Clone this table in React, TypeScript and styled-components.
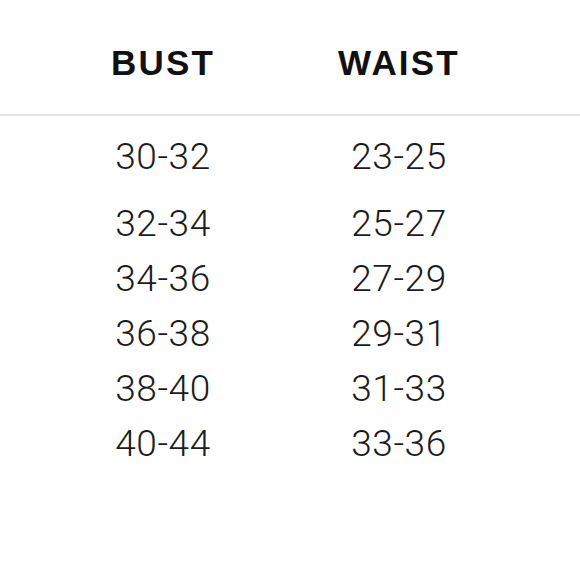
import React from "react";
import styled, { createGlobalStyle } from "styled-components";

const GlobalStyle = createGlobalStyle`
  html, body {
    margin: 0;
    padding: 0;
    background: #ffffff;
  }
  body {
    font-family: "Liberation Sans", Arial, sans-serif;
  }
`;

const Page = styled.div`
  width: 580px;
  height: 579px;
  background: #ffffff;
  overflow: hidden;
`;

const Columns = styled.div`
  display: grid;
  grid-template-columns: 236px 236px;
  padding-left: 45px;
`;

const HeaderBar = styled.div`
  padding-top: 45px;
  padding-bottom: 34px;
  border-bottom: 2px solid #e2e2e2;
`;

const HeadCell = styled.div`
  font-family: "Liberation Sans", Arial, sans-serif;
  font-weight: 700;
  font-size: 35px;
  line-height: 35px;
  letter-spacing: 2.2px;
  color: #111111;
  text-align: center;
`;

const Body = styled.div`
  display: flex;
  flex-direction: column;
  gap: 19px;
  padding-top: 23px;
`;

const Row = styled(Columns)<{ $lead?: boolean }>`
  margin-bottom: ${(p) => (p.$lead ? "12px" : "0")};
`;

const Cell = styled.div`
  font-family: Roboto, "Liberation Sans", sans-serif;
  font-weight: 300;
  font-size: 37px;
  line-height: 36px;
  letter-spacing: 0.6px;
  color: #1c1c1c;
  text-align: center;
`;

const rows: [string, string][] = [
  ["30-32", "23-25"],
  ["32-34", "25-27"],
  ["34-36", "27-29"],
  ["36-38", "29-31"],
  ["38-40", "31-33"],
  ["40-44", "33-36"],
];

export default function App() {
  return (
    <Page>
      <GlobalStyle />
      <HeaderBar>
        <Columns>
          <HeadCell>BUST</HeadCell>
          <HeadCell>WAIST</HeadCell>
        </Columns>
      </HeaderBar>
      <Body>
        {rows.map(([bust, waist], i) => (
          <Row key={bust} $lead={i === 0}>
            <Cell>{bust}</Cell>
            <Cell>{waist}</Cell>
          </Row>
        ))}
      </Body>
    </Page>
  );
}
